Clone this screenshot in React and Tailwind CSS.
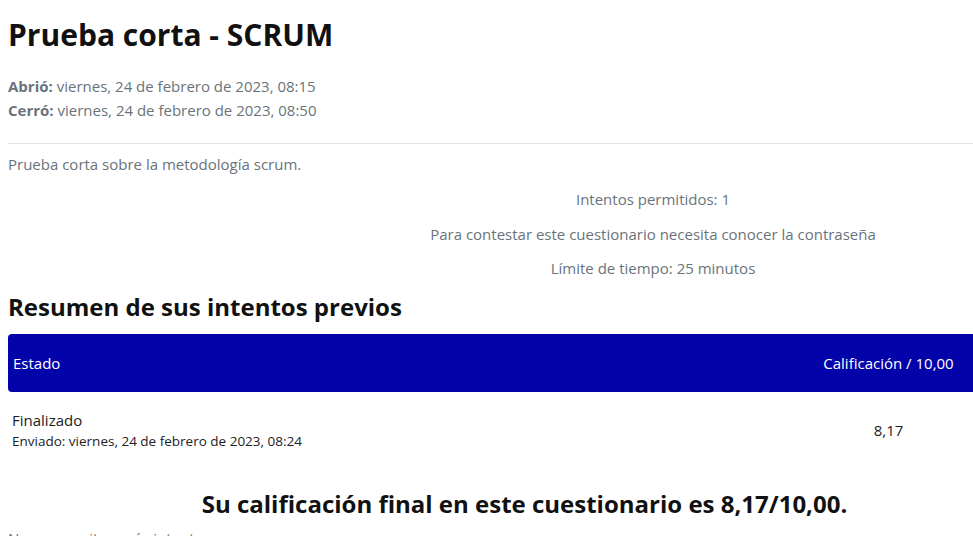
export default function App() {
  return (
    <div className="w-[973px] h-[536px] overflow-hidden bg-white" style={{ fontFamily: '"Open Sans", sans-serif' }}>
      <div className="w-[1298px] pl-2 pt-[17px]">
        <h2 className="text-[30px] leading-[36px] font-bold text-[#111]">Prueba corta - SCRUM</h2>

        <div className="mt-[21px] text-[15px] leading-[24px] text-[#6a737b]">
          <div><span className="font-bold">Abrió:</span> viernes, 24 de febrero de 2023, 08:15</div>
          <div><span className="font-bold">Cerró:</span> viernes, 24 de febrero de 2023, 08:50</div>
        </div>

        <hr className="mt-[21px] border-0 border-t border-[#dee2e6]" />

        <p className="mt-[8px] text-[15px] leading-[24px] text-[#6a737b]">Prueba corta sobre la metodología scrum.</p>

        <div className="mt-[11px] text-center text-[15px] leading-[24px] text-[#6a737b] flex flex-col gap-[10.5px]">
          <p>Intentos permitidos: 1</p>
          <p>Para contestar este cuestionario necesita conocer la contraseña</p>
          <p>Límite de tiempo: 25 minutos</p>
        </div>

        <h3 className="mt-[11px] text-[24px] leading-[31px] font-bold text-[#111]">Resumen de sus intentos previos</h3>

        <div className="mt-[12px] w-[1000px]">
          <div className="grid grid-cols-[761px_239px] h-[58px] items-center bg-[#0303aa] rounded-l-[4px] text-white text-[15px]">
            <div className="pl-[5px]">Estado</div>
            <div className="text-center">Calificación / 10,00</div>
          </div>
          <div className="grid grid-cols-[761px_239px] items-center py-[17px] text-[#1d2125]">
            <div className="pl-[4px]">
              <div className="text-[15px] leading-[22px]">Finalizado</div>
              <div className="text-[13.5px] leading-[20px]">Enviado: viernes, 24 de febrero de 2023, 08:24</div>
            </div>
            <div className="text-center text-[15px]">8,17</div>
          </div>
        </div>

        <div className="w-[1033px] mt-[20px] text-center text-[24px] leading-[31px] font-bold text-[#111]">
          Su calificación final en este cuestionario es 8,17/10,00.
        </div>

        <p className="mt-[7px] text-[15px] leading-[24px] text-[#6a737b]">No se permiten más intentos</p>
      </div>
    </div>
  )
}
